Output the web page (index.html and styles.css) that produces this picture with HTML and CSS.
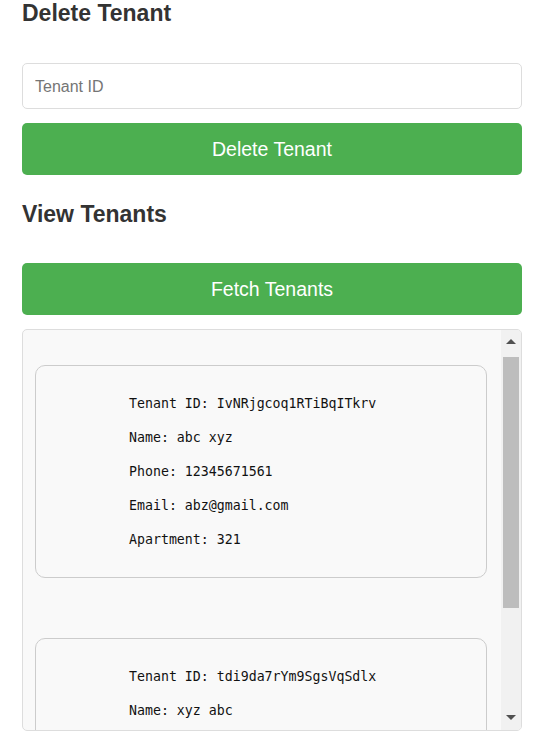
FILE: index.html
```html
<!DOCTYPE html>
<html lang="en">
<head>
<meta charset="utf-8">
<title>Tenants</title>
<link rel="stylesheet" href="styles.css">
</head>
<body>
<main class="page">
  <h2 class="title">Delete Tenant</h2>
  <input class="field" type="text" placeholder="Tenant ID">
  <button class="btn btn-delete" type="button">Delete Tenant</button>
  <h2 class="title title-view">View Tenants</h2>
  <button class="btn btn-fetch" type="button">Fetch Tenants</button>
  <div class="list-wrap">
    <div class="list">
      <div class="card">
        <p class="line">Tenant ID: IvNRjgcoq1RTiBqITkrv</p>
        <p class="line">Name: abc xyz</p>
        <p class="line">Phone: 12345671561</p>
        <p class="line">Email: abz@gmail.com</p>
        <p class="line">Apartment: 321</p>
      </div>
      <div class="card">
        <p class="line">Tenant ID: tdi9da7rYm9SgsVqSdlx</p>
        <p class="line">Name: xyz abc</p>
        <p class="line">Phone: 9876543210</p>
        <p class="line">Email: xyz@gmail.com</p>
        <p class="line">Apartment: 123</p>
      </div>
    </div>
    <div class="scrollbar" aria-hidden="true">
      <span class="arrow arrow-up"></span>
      <span class="thumb"></span>
      <span class="arrow arrow-down"></span>
    </div>
  </div>
</main>
</body>
</html>
```
FILE: styles.css
```css
* { box-sizing: border-box; }
html, body { margin: 0; padding: 0; background: #fff; }
body { font-family: "Liberation Sans", Arial, sans-serif; color: #333; }
.page { padding: 0 13px 0 22px; width: 535px; }
.title {
  margin: 0;
  font-size: 23px;
  line-height: 26px;
  font-weight: bold;
  color: #333;
}
.title-view { margin-top: 26px; }
.field {
  display: block;
  width: 100%;
  margin: 37px 0 0;
  height: 46px;
  padding: 1px 12px 0;
  border: 1px solid #ddd;
  border-radius: 5px;
  font-family: "Liberation Sans", Arial, sans-serif;
  font-size: 16px;
  color: #333;
  background: #fff;
  outline: none;
}
.field::placeholder { color: #757575; }
.btn {
  display: block;
  width: 100%;
  height: 52px;
  border: none;
  border-radius: 5px;
  background: #4caf50;
  color: #fff;
  font-family: "Liberation Sans", Arial, sans-serif;
  font-size: 19.5px;
  padding: 0;
}
.btn-delete { margin-top: 14px; }
.btn-fetch { margin-top: 36px; }
.list-wrap {
  position: relative;
  margin-top: 14px;
  height: 402px;
  border: 1px solid #ddd;
  border-radius: 5px;
  background: #f9f9f9;
  overflow: hidden;
}
.list {
  height: 100%;
  overflow-y: auto;
  scrollbar-width: none;
  padding: 35px 0 31px 12px;
}
.list::-webkit-scrollbar { display: none; }
.scrollbar {
  position: absolute;
  top: 0;
  right: 0;
  bottom: 0;
  width: 20px;
  background: #f1f1f1;
}
.thumb {
  position: absolute;
  top: 27px;
  left: 2px;
  right: 2px;
  height: 251px;
  background: #bdbdbd;
}
.arrow {
  position: absolute;
  left: 5px;
  width: 0;
  height: 0;
  border-left: 5px solid transparent;
  border-right: 5px solid transparent;
}
.arrow-up { top: 9px; border-bottom: 5px solid #505050; }
.arrow-down { bottom: 10px; border-top: 5px solid #505050; }
.card {
  width: 452px;
  border: 1px solid #ccc;
  border-radius: 10px;
  padding: 21px 10px 20px 93px;
  background: #f9f9f9;
}
.card + .card { margin-top: 60px; }
.line {
  margin: 0;
  font-family: "DejaVu Sans Mono", "Liberation Mono", monospace;
  font-size: 13.25px;
  line-height: 34px;
  color: #111;
  white-space: pre;
}
```
